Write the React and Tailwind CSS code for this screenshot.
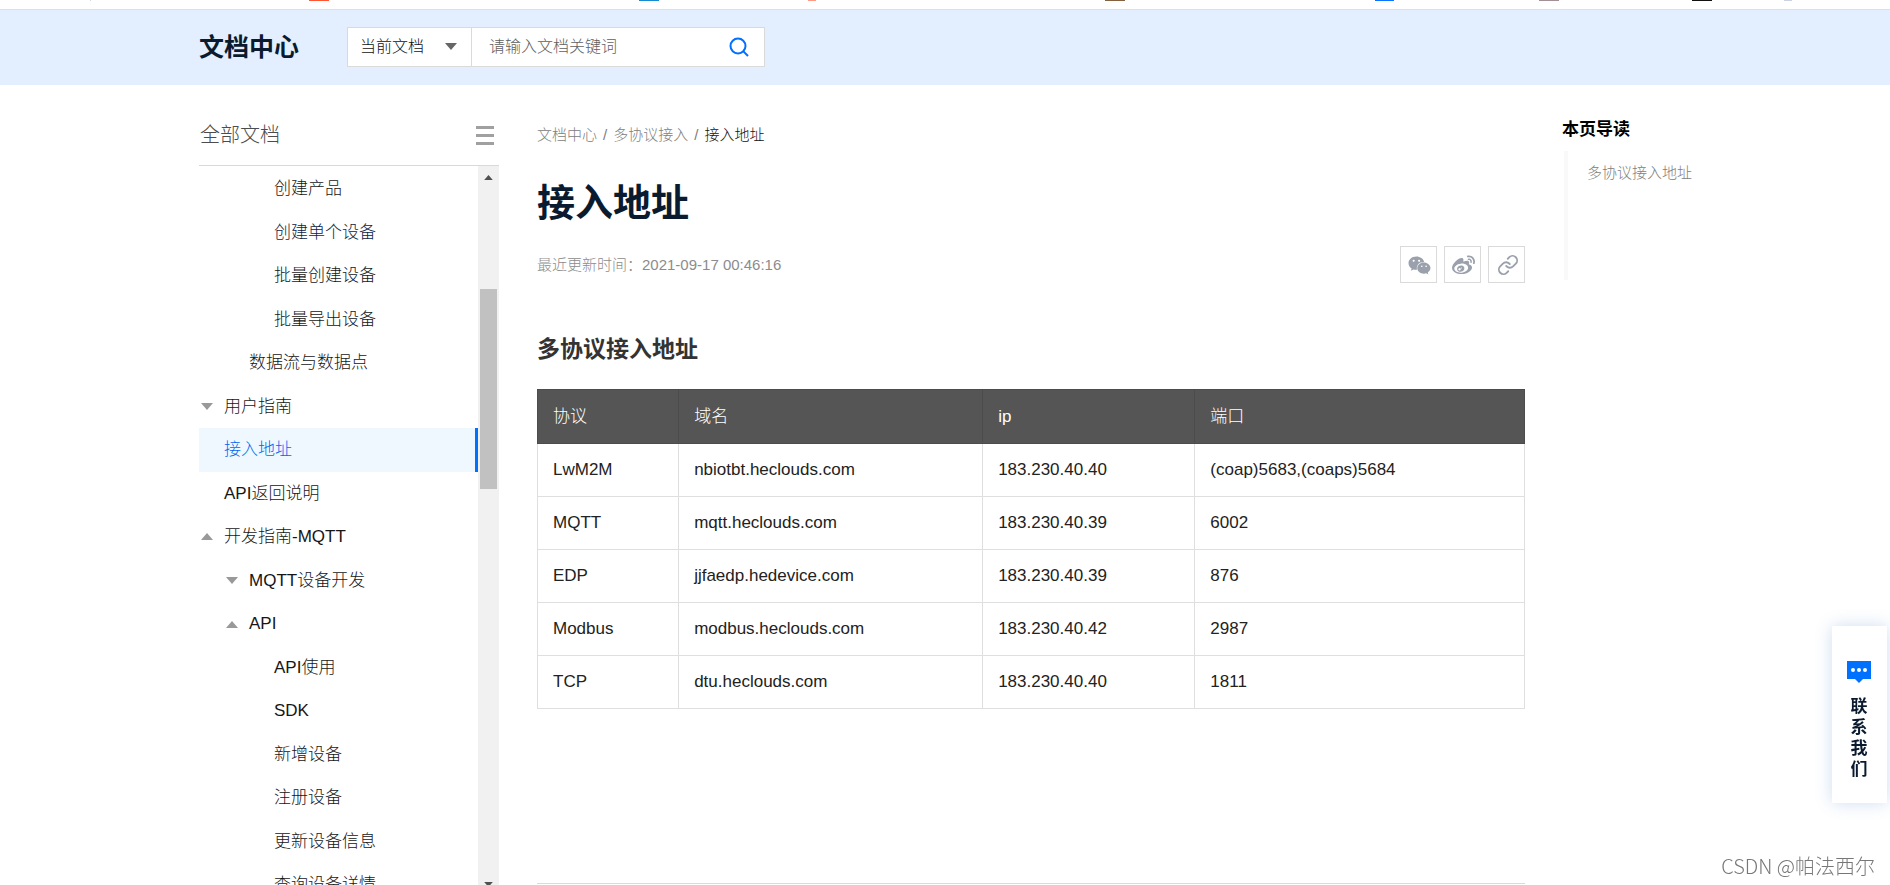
import { FaWeixin, FaWeibo } from "react-icons/fa";
import { FiLink } from "react-icons/fi";

const FAVICONS = [
  "ml-[90px] w-px bg-gray-300",
  "ml-[218px] w-5 bg-[#ff5436]",
  "ml-[310px] w-5 bg-[#168bcf]",
  "ml-[149px] w-2 bg-[#ff9a86]",
  "ml-[289px] w-5 bg-[#84623f]",
  "ml-[250px] w-[19px] bg-[#0a74ff]",
  "ml-[145px] w-5 bg-[#a58f97]",
  "ml-[133px] w-5 bg-[#111111]",
  "ml-[72px] w-2 bg-[#ccd3e0]",
];

const MENU = [
  { label: "创建产品", level: 2 },
  { label: "创建单个设备", level: 2, visited: true },
  { label: "批量创建设备", level: 2 },
  { label: "批量导出设备", level: 2 },
  { label: "数据流与数据点", level: 1 },
  { label: "用户指南", level: 0, arrow: "down" },
  { label: "接入地址", level: 0, active: true },
  { label: "API返回说明", level: 0 },
  { label: "开发指南-MQTT", level: 0, arrow: "up" },
  { label: "MQTT设备开发", level: 1, arrow: "down" },
  { label: "API", level: 1, arrow: "up" },
  { label: "API使用", level: 2 },
  { label: "SDK", level: 2 },
  { label: "新增设备", level: 2 },
  { label: "注册设备", level: 2 },
  { label: "更新设备信息", level: 2 },
  { label: "查询设备详情", level: 2 },
];

const INDENT = ["pl-0", "pl-[25px]", "pl-[50px]"];

const ROWS = [
  ["LwM2M", "nbiotbt.heclouds.com", "183.230.40.40", "(coap)5683,(coaps)5684"],
  ["MQTT", "mqtt.heclouds.com", "183.230.40.39", "6002"],
  ["EDP", "jjfaedp.hedevice.com", "183.230.40.39", "876"],
  ["Modbus", "modbus.heclouds.com", "183.230.40.42", "2987"],
  ["TCP", "dtu.heclouds.com", "183.230.40.40", "1811"],
];

function Triangle({ up, className }) {
  return (
    <svg viewBox="0 0 12 7" className={className} fill="currentColor" aria-hidden="true">
      <path d={up ? "M0 7 6 0l6 7z" : "M0 0h12L6 7z"} />
    </svg>
  );
}

function Header() {
  return (
    <header className="shrink-0 border-t border-[#dce0e6] bg-[#e3efff]">
      <div className="mx-auto flex h-[75px] max-w-[1492px] items-center pb-[2px]">
        <a href="#home" className="w-[148px] text-[25px] font-bold leading-8 text-[#0a1b2f]">
          文档中心
        </a>
        <form className="flex h-10 w-[418px] border border-[#dadada] bg-white" onSubmit={(e) => e.preventDefault()}>
          <div className="relative flex w-[124px] items-center border-r border-[#dadada]">
            <select
              aria-label="搜索范围"
              className="h-full w-full appearance-none bg-transparent pl-3 text-base font-light text-[#111] outline-none"
            >
              <option>当前文档</option>
            </select>
            <Triangle className="pointer-events-none absolute right-[14px] h-[7px] w-3 text-[#666]" />
          </div>
          <input
            type="text"
            aria-label="搜索文档"
            placeholder="请输入文档关键词"
            className="min-w-0 flex-1 pl-[17px] text-base font-light text-[#333] outline-none placeholder:text-[#606060]"
          />
          <button type="submit" aria-label="搜索" className="flex w-[46px] items-center text-[#0070ff]">
            <svg viewBox="0 0 20 20" className="ml-[11px] h-5 w-5" fill="none" stroke="currentColor" strokeWidth="2" aria-hidden="true">
              <circle cx="9" cy="9" r="7.5" />
              <path d="m14.4 14.4 4.6 4.6" />
            </svg>
          </button>
        </form>
      </div>
    </header>
  );
}

function Sidebar() {
  return (
    <nav className="flex w-[300px] shrink-0 flex-col overflow-hidden" aria-label="全部文档">
      <div className="flex h-[81px] shrink-0 items-center justify-between border-b border-[#d9d9d9] pl-px pr-[5px] pt-5">
        <h2 className="text-xl font-light leading-6 text-[#4c4c4c]">全部文档</h2>
        <button type="button" aria-label="收起目录" className="flex w-[18px] flex-col gap-[5px]">
          <span className="h-[3px] bg-[#a0a0a0]" />
          <span className="h-[3px] bg-[#a0a0a0]" />
          <span className="h-[3px] bg-[#a0a0a0]" />
        </button>
      </div>
      <div className="flex min-h-0 flex-1 overflow-hidden">
        <ul className="mt-px grid h-[740px] flex-1 auto-rows-fr">
          {MENU.map((m) => (
            <li key={m.label} className="flex">
              <a
                href={`#${m.label}`}
                className={`flex flex-1 items-center text-[17px] font-light ${
                  m.active
                    ? "border-r-[3px] border-[#0070ff] bg-[#f0f8ff] text-[#0066f0]"
                    : m.visited
                      ? "text-[#0d2546]"
                      : "text-[#161616]"
                } ${INDENT[m.level]}`}
              >
                <span className="flex w-[25px] pl-[2px]">
                  {m.arrow && <Triangle up={m.arrow === "up"} className="h-[7px] w-3 text-[#999]" />}
                </span>
                {m.label}
              </a>
            </li>
          ))}
        </ul>
        <div className="flex w-[21px] flex-col items-center bg-[#f1f1f1]" aria-hidden="true">
          <Triangle up className="mt-[9px] h-[5px] w-[9px] shrink-0 text-[#505050]" />
          <span className="mt-[109px] h-[200px] w-[17px] shrink-0 bg-[#c1c1c1]" />
          <Triangle className="-mb-[2px] mt-auto h-[5px] w-[9px] shrink-0 text-[#505050]" />
        </div>
      </div>
    </nav>
  );
}

function ShareButton({ label, children }) {
  return (
    <button
      type="button"
      aria-label={label}
      className="flex h-[37px] w-[37px] items-center justify-center border border-[#dadada] pl-[2px] pt-px text-[#9aa1ac]"
    >
      {children}
    </button>
  );
}

function Article() {
  return (
    <main className="ml-[38px] min-w-0 flex-1 pt-10">
      <div className="flex gap-[6px] text-[15px] font-light leading-5 text-[#808080]">
        <a href="#home">文档中心</a>
        <span>/</span>
        <a href="#protocols">多协议接入</a>
        <span>/</span>
        <span className="text-[#111]">接入地址</span>
      </div>
      <h1 className="mt-[34px] text-[38px] font-bold leading-[48px] text-[#0a1b2f]">接入地址</h1>
      <div className="mt-[19px] flex items-center justify-between">
        <p className="text-[15px] font-light leading-5 text-[#8c8c8c]">最近更新时间：2021-09-17 00:46:16</p>
        <div className="flex gap-[7px]">
          <ShareButton label="微信">
            <FaWeixin size={23} />
          </ShareButton>
          <ShareButton label="微博">
            <FaWeibo size={23} />
          </ShareButton>
          <ShareButton label="复制链接">
            <FiLink size={22} />
          </ShareButton>
        </div>
      </div>
      <h2 className="mt-[50px] text-[23px] font-bold leading-8 text-[#333]">多协议接入地址</h2>
      <table className="mt-6 w-full table-fixed border-collapse text-left text-[17px] leading-6">
        <colgroup>
          <col className="w-[14.3%]" />
          <col className="w-[30.8%]" />
          <col className="w-[21.5%]" />
          <col />
        </colgroup>
        <thead>
          <tr className="h-[54px] bg-[#555] text-white">
            {["协议", "域名", "ip", "端口"].map((h) => (
              <th key={h} className={`border border-[#4c4c4c] px-[15px] ${h === "ip" ? "font-medium" : "font-light"}`}>
                {h}
              </th>
            ))}
          </tr>
        </thead>
        <tbody>
          {ROWS.map((r) => (
            <tr key={r[0]} className="h-[53px] text-[#222]">
              {r.map((c) => (
                <td key={c} className="border border-[#dfdfdf] px-[15px]">
                  {c}
                </td>
              ))}
            </tr>
          ))}
        </tbody>
      </table>
      <hr className="mt-[174px] border-[#dadada]" />
    </main>
  );
}

function PageGuide() {
  return (
    <aside className="ml-[37px] w-[129px] shrink-0 pt-[33px]">
      <h2 className="text-[17px] font-bold leading-6 text-black">本页导读</h2>
      <ul className="ml-[2px] mt-[9px] h-[129px] border-l-4 border-[#f9f9f9] pl-[19px] pt-3">
        <li className="whitespace-nowrap text-[15px] font-light leading-5 text-[#808080]">
          <a href="#address">多协议接入地址</a>
        </li>
      </ul>
    </aside>
  );
}

export default function App() {
  return (
    <div className="flex h-screen flex-col overflow-hidden bg-white font-['Liberation_Sans','Noto_Sans_CJK_SC',sans-serif]">
      <div className="flex h-[9px] shrink-0" aria-hidden="true">
        {FAVICONS.map((c) => (
          <span key={c} className={`h-px shrink-0 ${c}`} />
        ))}
      </div>
      <Header />
      <div className="mx-auto flex min-h-0 w-full max-w-[1492px] flex-1">
        <Sidebar />
        <Article />
        <PageGuide />
      </div>
      <button
        type="button"
        className="fixed right-[3px] top-[626px] flex h-[177px] w-[55px] flex-col items-center bg-white pr-px pt-[35px] text-[17px] font-bold leading-[21px] text-[#0a1b2f] shadow-[0_0_16px_rgba(40,100,190,0.22)]"
      >
        <svg viewBox="0 0 24 22" className="mb-[13px] h-[22px] w-6" aria-hidden="true">
          <path d="M0 0h24v18h-8l-4 4-4-4H0z" fill="#0070ff" />
          <circle cx="6" cy="9" r="2" fill="#fff" />
          <circle cx="12" cy="9" r="2" fill="#fff" />
          <circle cx="18" cy="9" r="2" fill="#fff" />
        </svg>
        <span className="w-[17px]">联系我们</span>
      </button>
      <p className="fixed bottom-[7px] right-[15px] font-['Noto_Sans_CJK_SC',sans-serif] text-xl font-light leading-6 text-[#777]">
        CSDN @帕法西尔
      </p>
    </div>
  );
}
